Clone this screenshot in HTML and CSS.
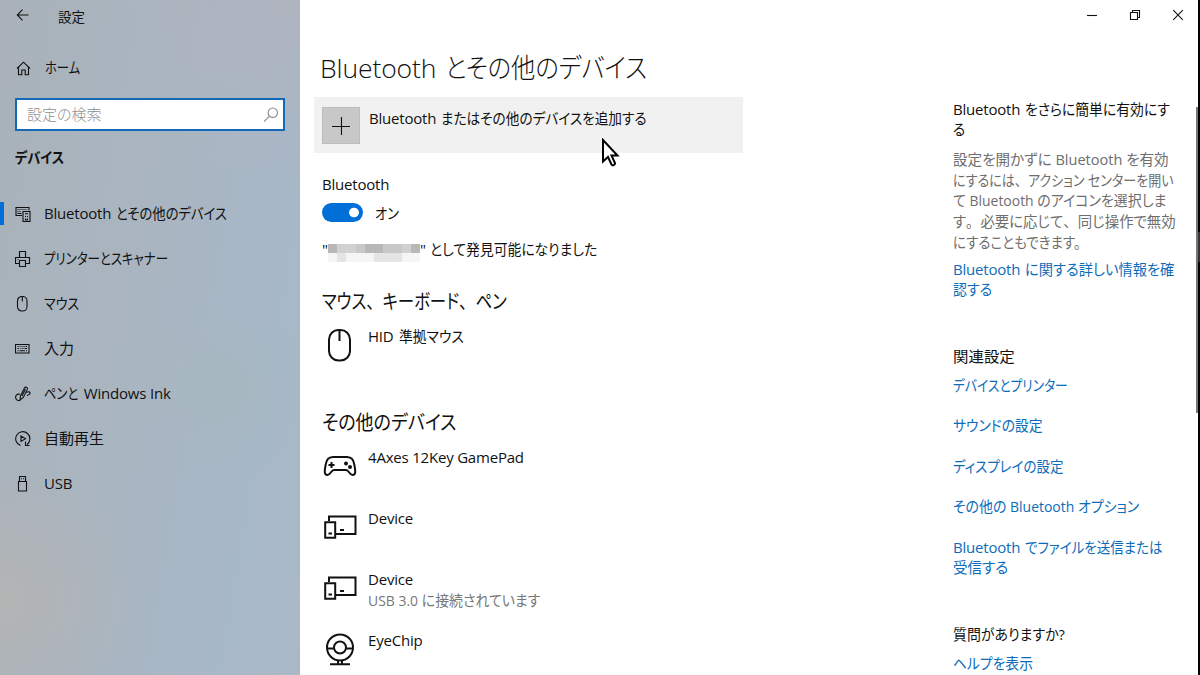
FILE: index.html
```
<!DOCTYPE html>
<html lang="ja">
<head>
  <meta charset="UTF-8" />
  <meta name="viewport" content="width=device-width, initial-scale=1.0"/>
  <title>設定</title>
  <link rel="stylesheet" href="styles.css">
</head>
<body>

<aside class="sidebar">
  <div class="titlebar">
    <svg class="back" width="14" height="12" viewBox="0 0 14 12"><path d="M6.500 .7 1.300 6l5.200 5.300M1.300 6h11.200"/></svg>
    <span>設定</span>
  </div>

  <div class="home">
    <svg width="15" height="15" viewBox="0 0 15 15"><path d="M1 7.500 7.500 1.200 14 7.500M2.500 6.500v7.300h3.300V9h3.400v4.800h3.300V6.500"/></svg>
    <span class="jp x82">ホーム</span>
  </div>

  <div class="search">
    <span class="jp">設定の検索</span>
    <svg width="16" height="16" viewBox="0 0 16 16"><circle cx="9.800" cy="5.700" r="4.700"/><path d="M6.400 9.100 1 14.700"/></svg>
  </div>

  <h3><span class="jp x88">デバイス</span></h3>

  <nav>
    <a class="active">
      <svg width="16" height="16" viewBox="0 0 16 16"><path d="M7 9.500H1V1.500h13v3M2.500 3.500h1M4.500 3.500h1M6.500 3.500h1M8.500 3.500h1M10.500 3.500h1M2.500 5.500h1M4.500 5.500h1M2.500 7.500h4M8 5.500h7v10H8zM10 7.800h3M10 10.500h1M12 10.500h1M10.500 12.500v1.500h2v-1.500"/></svg>
      <span class="line"><span class="en">Bluetooth</span><span class="jp x89">とその他のデバイス</span></span>
    </a>
    <a>
      <svg width="16" height="16" viewBox="0 0 16 16"><path d="M4.500 6.500v-6h6v6M4 12.500H.5v-6h14v6H11M4.500 9.500h6v6h-6zM2.500 8.500h1"/></svg>
      <span class="jp x83">プリンターとスキャナー</span>
    </a>
    <a>
      <svg width="16" height="16" viewBox="0 0 16 16"><rect x="2.500" y=".5" width="9.500" height="14.500" rx="4.300"/><path d="M7.300 1v4.500"/></svg>
      <span class="jp x87">マウス</span>
    </a>
    <a>
      <svg width="16" height="16" viewBox="0 0 16 16"><path d="M.5 3.500h13.500v8.500H.5zM2.500 5.500h1M4.500 5.500h1M6.500 5.500h1M8.500 5.500h1M10.500 5.500h1.500M2.500 7.500h1.500M5.500 7.500h1M7.500 7.500h1M9.500 7.500h2.500M2.500 9.700h1M4.500 9.700h5.500M11 9.700h1"/></svg>
      <span class="jp">入力</span>
    </a>
    <a>
      <svg width="16" height="16" viewBox="0 0 16 16"><path d="M5 14 5.500 10 9.500 2c.8-1.600 3.600-.6 2.800 1.400L8.300 11.500zM10.500 3 7 10M5 8.300C2 7.500-.3 10 1 12.800c.8 1.900 3 2.200 4.500 1.200M11.500 6.500c2-1.200 3.700-.8 3.500.8-.2 1.200-1.800 1.200-3 2.500"/></svg>
      <span class="line"><span class="jp x82">ペンと</span><span class="en ink">Windows Ink</span></span>
    </a>
    <a>
      <svg width="16" height="16" viewBox="0 0 16 16"><path d="M5.500 14.500A7.100 7.100 0 1 1 12 13.500M10.500 10.500v4h4M6 5l4.500 2.700L6 10.400z"/></svg>
      <span class="jp">自動再生</span>
    </a>
    <a>
      <svg width="16" height="16" viewBox="0 0 16 16"><path d="M4.500 5.500v-5h6v5M3.500 5.500h8v9.500h-8zM6 2.700h1M8 2.700h1"/></svg>
      <span class="en">USB</span>
    </a>
  </nav>
</aside>

<div class="page">
  <div class="window-buttons">
    <svg width="12" height="12" viewBox="0 0 12 12"><path d="M1 6.500h10"/></svg>
    <svg width="12" height="12" viewBox="0 0 12 12"><path d="M1.500 3.500h7v7h-7zM3.500 3.500v-2h7v7h-2"/></svg>
    <svg width="12" height="12" viewBox="0 0 12 12"><path d="M1.200 1.200l9.600 9.600M10.800 1.200l-9.600 9.600"/></svg>
  </div>

  <div class="content">
    <main>
      <h1 class="line"><span class="en">Bluetooth</span><span class="jp x90">とその他のデバイス</span></h1>

      <div class="add-device">
        <div class="plus"><svg width="20" height="20" viewBox="0 0 20 20"><path d="M10.500 1v18M1 10.500h18"/></svg></div>
        <span class="line"><span class="en">Bluetooth</span><span class="jp x91">またはその他のデバイスを追加する</span></span>
        <svg class="cursor" width="20" height="30" viewBox="0 0 20 30"><path d="M2 2v21.500l5-4.500 3.500 7.500c1 1.500 4 .3 3.500-1.500L10.500 17.500H16.500z"/></svg>
      </div>

      <div class="label en">Bluetooth</div>
      <div class="switch-row">
        <div class="switch"></div>
        <span class="jp x88">オン</span>
      </div>

      <div class="discoverable">
        <span>"</span>
        <div class="mosaic">
          <i class="g4"></i><i class="g2"></i><i class="g2"></i><i class="g3"></i><i class="g4"></i><i class="g4"></i><i class="g3"></i><i class="g3"></i><i class="g2"></i><i class="g4"></i>
          <i class="g0"></i><i class="g1"></i><i class="g0"></i><i class="g0"></i><i class="g0"></i><i class="g1"></i><i class="g1"></i><i class="g1"></i><i class="g0"></i><i class="g0"></i>
        </div>
        <span>"</span>
        <span class="jp x92 found">として発見可能になりました</span>
      </div>

      <h2><span class="jp x82">マウス<i class="wide">、</i>キーボード<i class="wide">、</i>ペン</span></h2>
      <div class="device">
        <svg width="34" height="36" viewBox="0 0 34 36"><rect x="6" y="3" width="21" height="30.500" rx="9.500"/><path d="M16.500 3v11"/></svg>
        <div class="line"><span class="en">HID</span><span class="jp x92">準拠マウス</span></div>
      </div>

      <h2><span class="jp x90">その他のデバイス</span></h2>
      <div class="device">
        <svg width="34" height="36" viewBox="0 0 34 36"><path d="M10 9h14c5 0 6.500 3 7.500 8.500 1 5.500 1.500 9.500-2 9.500-3 0-3.500-5-6.500-5H11c-3 0-3.500 5-6.500 5-3.500 0-3-4-2-9.500C3.500 12 5 9 10 9zM5.500 17h6M8.500 14v6"/><circle class="dot" cx="23" cy="15.500" r="2"/><circle class="dot" cx="27" cy="19" r="2"/></svg>
        <div class="en">4Axes 12Key GamePad</div>
      </div>
      <div class="device">
        <svg width="34" height="36" viewBox="0 0 34 36"><path d="M6 12V7.500h26.500V25H12.500M2.200 13.200h10v15.500h-10zM5.500 24.500h3.500M17 21h4"/></svg>
        <div class="en">Device</div>
      </div>
      <div class="device">
        <svg width="34" height="36" viewBox="0 0 34 36"><path d="M6 12V7.500h26.500V25H12.500M2.200 13.200h10v15.500h-10zM5.500 24.500h3.500M17 21h4"/></svg>
        <div>
          <div class="en">Device</div>
          <div class="sub x93">USB 3.0 に接続されています</div>
        </div>
      </div>
      <div class="device">
        <svg width="34" height="36" viewBox="0 0 34 36"><circle cx="17" cy="16.500" r="13"/><circle cx="17" cy="16.500" r="6"/><path d="M4 17.500h7M23 17.500h7M15 29v4M19 29v4M7 33.300h20"/></svg>
        <div class="en">EyeChip</div>
      </div>
    </main>

    <aside class="help">
      <section>
        <div class="line"><span class="en">Bluetooth</span><span class="jp x92">をさらに簡単に有効にす</span></div>
        <div class="jp x92">る</div>
        <p>
          <span class="x97">設定を開かずに Bluetooth を有効</span>
          <span class="x87">にするには<i class="wide">、</i>アクション センターを開い</span>
          <span class="x93">て Bluetooth のアイコンを選択しま</span>
          <span class="x96">す<i class="wide">。</i>必要に応じて<i class="wide">、</i>同じ操作で無効</span>
          <span class="x90">にすることもできます。</span>
        </p>
        <a>
          <span class="line"><span class="en">Bluetooth</span><span class="jp x95">に関する詳しい情報を確</span></span>
          <span class="jp x93">認する</span>
        </a>
      </section>

      <section class="related">
        <div class="jp x103">関連設定</div>
        <a><span class="jp x85">デバイスとプリンター</span></a>
        <a><span class="jp x92">サウンドの設定</span></a>
        <a><span class="jp x90">ディスプレイの設定</span></a>
        <a><span class="jp x93">その他の Bluetooth オプション</span></a>
        <a>
          <span class="line"><span class="en">Bluetooth</span><span class="jp x90">でファイルを送信または</span></span>
          <span class="jp x97">受信する</span>
        </a>
      </section>

      <section class="question">
        <div class="jp x93">質問がありますか?</div>
        <a><span class="jp x92">ヘルプを表示</span></a>
      </section>
    </aside>
    <div class="scrollbar"></div>
  </div>
</div>
<div class="edge"></div>

</body>
</html>
```
FILE: styles.css
```
* { box-sizing: border-box; }
body { margin: 0; width: 1200px; height: 675px; display: flex; overflow: hidden; background: #fff; color: #111; font-family: "Open Sans", "Noto Sans CJK JP", sans-serif; font-size: 15px; line-height: 20px; font-feature-settings: "palt"; white-space: nowrap; }
h1, h2, h3, p { margin: 0; font-weight: normal; }
svg { display: block; flex: none; fill: none; stroke: #111; stroke-width: 1.1; }
a { color: #0c6cba; }

/* text */
.line { display: flex; gap: 5px; }
.en { letter-spacing: -0.2px; }
.jp { display: block; }
.wide { font-style: normal; font-feature-settings: normal; }
.x82, .x83, .x85, .x87, .x88, .x89, .x90, .x91, .x92, .x93, .x95, .x96, .x97, .x103 { display: block; transform-origin: 0 50%; }
.x82 { transform: scaleX(0.82); }
.x83 { transform: scaleX(0.83); }
.x85 { transform: scaleX(0.85); }
.x87 { transform: scaleX(0.87); }
.x88 { transform: scaleX(0.88); }
.x89 { transform: scaleX(0.89); }
.x90 { transform: scaleX(0.9); }
.x91 { transform: scaleX(0.91); }
.x92 { transform: scaleX(0.92); }
.x93 { transform: scaleX(0.93); }
.x95 { transform: scaleX(0.95); }
.x96 { transform: scaleX(0.96); }
.x97 { transform: scaleX(0.97); }
.x103 { transform: scaleX(1.03); }

/* sidebar */
.sidebar { width: 300px; flex: none; overflow: hidden; background: radial-gradient(circle at 0 600px, rgba(184,181,177,0.7), transparent 140px), radial-gradient(circle at 225px 390px, rgba(166,184,188,0.6), transparent 90px), radial-gradient(circle at 290px 0, rgba(178,180,190,0.8), transparent 190px), linear-gradient(100deg, #a9b2ba 0%, #a9b5c0 45%, #a7b8c9 80%, #aab8c6 100%); }
.titlebar { display: flex; align-items: center; height: 30px; padding: 4px 0 0 16px; font-size: 13.5px; }
.titlebar span { margin-left: 28px; }
.titlebar .back { margin-top: -5px; }
.home { display: flex; align-items: center; gap: 14px; height: 30px; margin-top: 23px; padding-left: 16px; }
.home span { margin-top: -2px; }
.search { display: flex; align-items: center; justify-content: space-between; width: 270px; height: 33px; margin: 15px 0 0 15px; padding: 0 4px 0 10px; background: #fff; border: 2px solid #1269b8; color: #8f8f8f; }
.search span { margin-top: -2px; font-weight: 300; }
.search svg { stroke: #8a8a8a; }
h3 { margin: 16px 0 24px 15px; font-size: 15px; font-weight: 600; line-height: 20px; }
nav a { display: flex; align-items: center; gap: 13px; height: 45px; padding-left: 15px; color: #111; }
nav a.active { background: linear-gradient(#0070d8, #0070d8) 0 11px / 4px 23px no-repeat; }
nav a > span { margin-top: -2px; }
nav .ink { margin-left: -7px; }

/* page */
.page { width: 898px; flex: none; }
.window-buttons { display: flex; justify-content: flex-end; gap: 31px; height: 30px; padding: 9px 14px 0 0; }
.content { display: flex; }
main { width: 443px; padding-left: 14px; }
h1 { margin: 14px 0 5px 6px; font-size: 27px; font-weight: 300; line-height: 48px; }
h1.line { gap: 9px; }
h1 .en { font-size: 26.5px; letter-spacing: -0.1px; }
.add-device { position: relative; display: flex; gap: 9px; height: 56px; padding: 10px 0 0 8px; background: #f1f1f1; }
.add-device .line { margin-top: 1px; }
.plus { display: flex; align-items: center; justify-content: center; width: 38px; height: 37px; background: #c8c8c8; border: 1px solid #bdbdbd; }
.cursor { position: absolute; left: 287px; top: 41px; fill: #fff; stroke: #000; stroke-width: 2; }
.label { margin: 21px 0 9px 8px; }
.switch-row { display: flex; gap: 12px; margin-left: 8px; }
.switch { width: 41px; height: 19px; border-radius: 10px; background: radial-gradient(circle at 32px 9.500px, #fff 4.500px, transparent 5.200px), #0070d8; }
.discoverable { display: flex; margin: 16px 0 26px 8px; }
.mosaic { display: grid; grid-template-columns: repeat(10, 1fr); grid-template-rows: 9px 9px; width: 92px; margin-top: 5px; }
.g0 { background: #f5f5f5; }
.g1 { background: #e4e4e4; }
.g2 { background: #d1d1d1; }
.g3 { background: #c8c8c8; }
.g4 { background: #b8b8b8; }
.found { margin-left: 4px; }
h2 { margin: 0 0 10px 8px; font-size: 20px; line-height: 28px; }
.device { display: flex; gap: 11px; height: 61px; padding-left: 9px; }
.device svg { margin-top: 1px; stroke-width: 2; }
.device .dot { fill: #111; stroke: none; }
.device + h2 { margin-top: 22px; }
.sub { margin-top: 1px; color: #777; }

/* right column */
.help { width: 225px; margin: 70px 0 0 210px; }
.help section:first-child { margin-top: -1px; }
.help p { margin: 10px 0 6px; color: #6e6e6e; line-height: 20.7px; }
.related { margin-top: 47px; }
.related a { display: block; margin-bottom: 20.500px; }
.related div { margin-bottom: 9px; }
.question { margin-top: 47px; }
.question a { display: block; margin-top: 9px; }
.scrollbar { width: 2px; height: 306px; margin: 77px 0 0 auto; background: #777; }
.edge { width: 2px; background: linear-gradient(#000 232px, #333 232px, #333 262px, #000 262px); }
```
